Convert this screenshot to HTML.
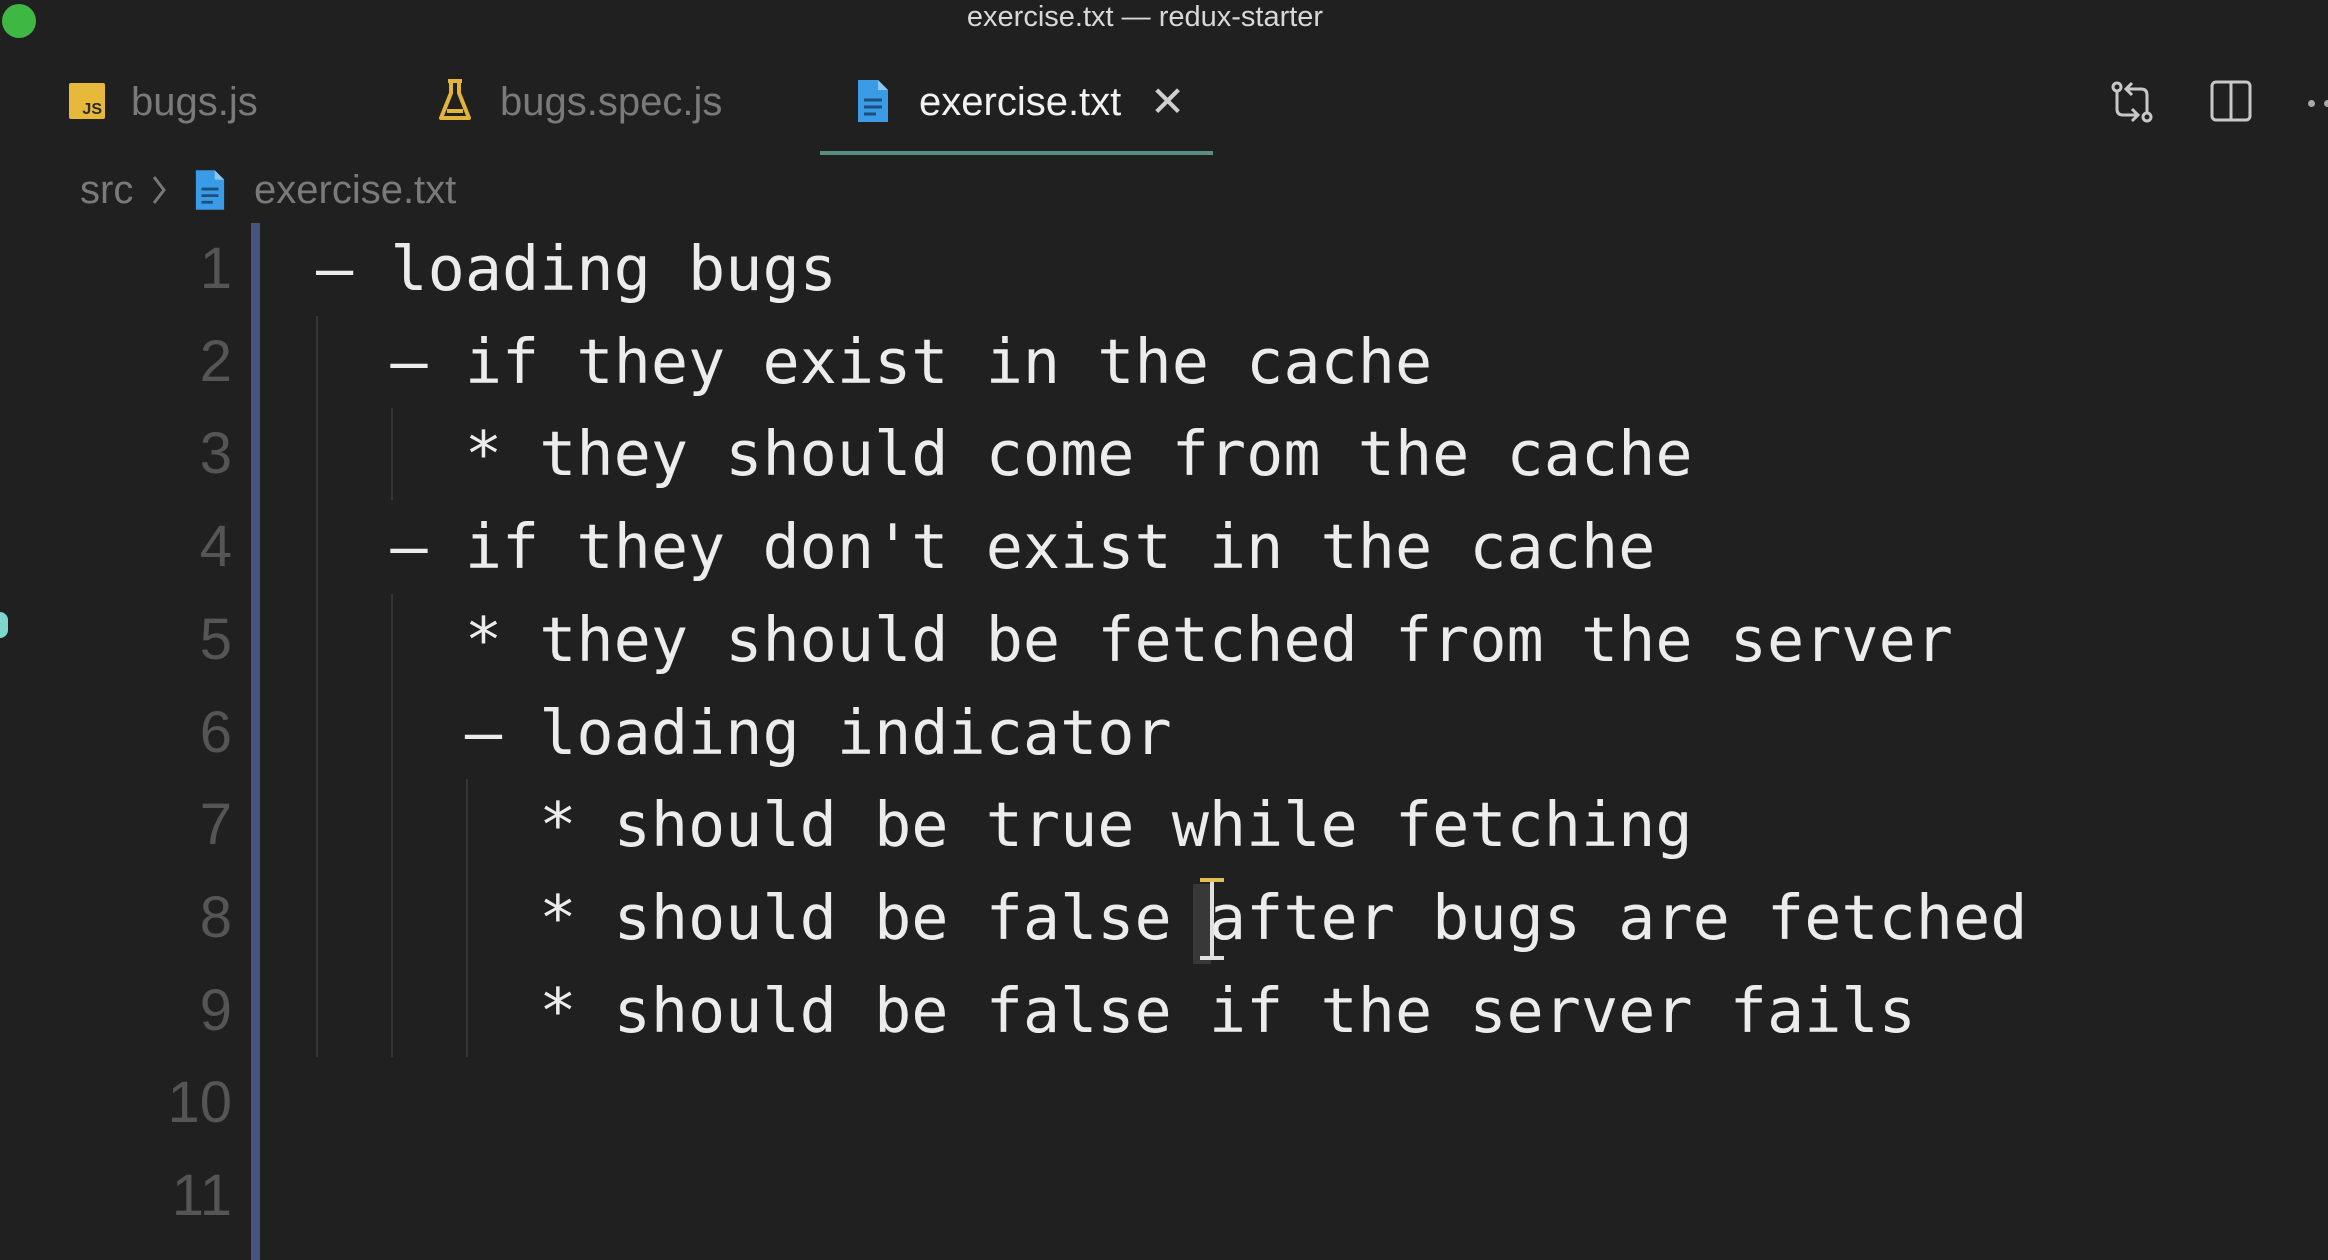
<!DOCTYPE html>
<html><head><meta charset="utf-8"><style>
html,body{margin:0;padding:0;width:2328px;height:1260px;background:#202020;overflow:hidden;position:relative;font-family:"Liberation Sans",sans-serif}
.abs{position:absolute}
.title{top:0;left:0;width:2290px;text-align:center;color:#d8d8d8;font-size:29px;line-height:34px}
.tab{top:76px;font-size:40px;line-height:52px;color:#7a7a7a;white-space:nowrap}
.code{font-family:"DejaVu Sans Mono","Liberation Mono",monospace;font-size:61.8px;color:#ececec;white-space:pre;line-height:92.7px;left:316px;top:223px}
.ln{font-family:"Liberation Sans",sans-serif;font-size:58px;color:#555;text-align:right;width:232px;left:0;top:223px;line-height:92.7px;white-space:pre}
.guide{width:2px;background:#353535}
</style></head><body>
<div class="abs" style="left:2px;top:4px;width:34px;height:34px;border-radius:50%;background:#3fb843"></div>
<div class="abs title">exercise.txt — redux-starter</div>

<div class="abs" style="left:69px;top:83px;width:36px;height:36px;background:#e7b93a;border-radius:2px"><span style="position:absolute;right:3px;bottom:1px;font-size:16px;font-weight:bold;color:#2a2a2a;line-height:16px">JS</span></div>
<div class="abs tab" style="left:131px">bugs.js</div>
<svg class="abs" style="left:438px;top:78px" width="34" height="46" viewBox="0 0 34 46"><path d="M10 3h14M13 3v12L3 40h28L21 15V3" fill="none" stroke="#e2b53a" stroke-width="4" stroke-linejoin="round"/><path d="M9 33h16" stroke="#e2b53a" stroke-width="4"/></svg>
<div class="abs tab" style="left:500px">bugs.spec.js</div>
<svg class="abs" style="left:856px;top:78px" width="34" height="46" viewBox="0 0 34 46"><path d="M2 2h20l10 10v32H2z" fill="#3a9be6"/><path d="M22 2v10h10" fill="#8cc7f2"/><path d="M8 22h18M8 29h18M8 36h12" stroke="#1c4f7a" stroke-width="3"/></svg>
<div class="abs tab" style="left:919px;color:#f2f2f2">exercise.txt</div>
<div class="abs" style="left:1150px;top:76px;font-size:42px;line-height:52px;color:#cfcfcf">✕</div>
<div class="abs" style="left:820px;top:151px;width:393px;height:4px;background:#5a8d82"></div>

<svg class="abs" style="left:2108px;top:78px" width="48" height="48" viewBox="0 0 48 48" fill="none" stroke="#c8c8c8" stroke-width="3"><circle cx="9" cy="9" r="4"/><path d="M9 13v18q0 6 6 6h14M24 31l6 6-6 6"/><circle cx="39" cy="39" r="4"/><path d="M39 35V17q0-6-6-6H19M24 5l-6 6 6 6"/></svg>
<svg class="abs" style="left:2209px;top:79px" width="44" height="44" viewBox="0 0 44 44" fill="none" stroke="#c8c8c8" stroke-width="3"><rect x="3" y="3" width="38" height="38" rx="4"/><path d="M22 3v38"/></svg>
<div class="abs" style="left:2308px;top:100px;width:7px;height:7px;border-radius:50%;background:#aaa"></div>
<div class="abs" style="left:2324px;top:100px;width:7px;height:7px;border-radius:50%;background:#aaa"></div>

<div class="abs tab" style="left:80px;top:164px;color:#7a7a7a">src</div>
<svg class="abs" style="left:151px;top:174px" width="16" height="32" viewBox="0 0 16 32"><path d="M3 3l10 13L3 29" fill="none" stroke="#777" stroke-width="3"/></svg>
<svg class="abs" style="left:194px;top:168px" width="32" height="44" viewBox="0 0 34 46"><path d="M2 2h20l10 10v32H2z" fill="#3a9be6"/><path d="M22 2v10h10" fill="#8cc7f2"/><path d="M8 22h18M8 29h18M8 36h12" stroke="#1c4f7a" stroke-width="3"/></svg>
<div class="abs tab" style="left:254px;top:164px;color:#7a7a7a">exercise.txt</div>

<div class="abs" style="left:251px;top:223px;width:9px;height:1037px;background:#44557f"></div>
<div class="abs" style="left:0;top:612px;width:8px;height:26px;border-radius:0 13px 13px 0;background:#7fd8cc"></div>
<div class="abs guide" style="left:316px;top:316px;height:741px"></div>
<div class="abs guide" style="left:391px;top:408px;height:92px"></div>
<div class="abs guide" style="left:391px;top:594px;height:463px"></div>
<div class="abs guide" style="left:466px;top:779px;height:278px"></div>
<div class="abs ln">1
2
3
4
5
6
7
8
9
10
11</div>
<div class="abs code">– loading bugs
  – if they exist in the cache
    * they should come from the cache
  – if they don't exist in the cache
    * they should be fetched from the server
    – loading indicator
      * should be true while fetching
      * should be false after bugs are fetched
      * should be false if the server fails
</div>
<div class="abs" style="left:1193px;top:884px;width:18px;height:80px;background:#383838"></div>
<div class="abs" style="left:1210px;top:878px;width:4px;height:80px;background:#e0e0e0"></div>
<div class="abs" style="left:1200px;top:878px;width:24px;height:4px;background:#e0c050"></div>
<div class="abs" style="left:1200px;top:956px;width:24px;height:4px;background:#e0e0e0"></div>
</body></html>
